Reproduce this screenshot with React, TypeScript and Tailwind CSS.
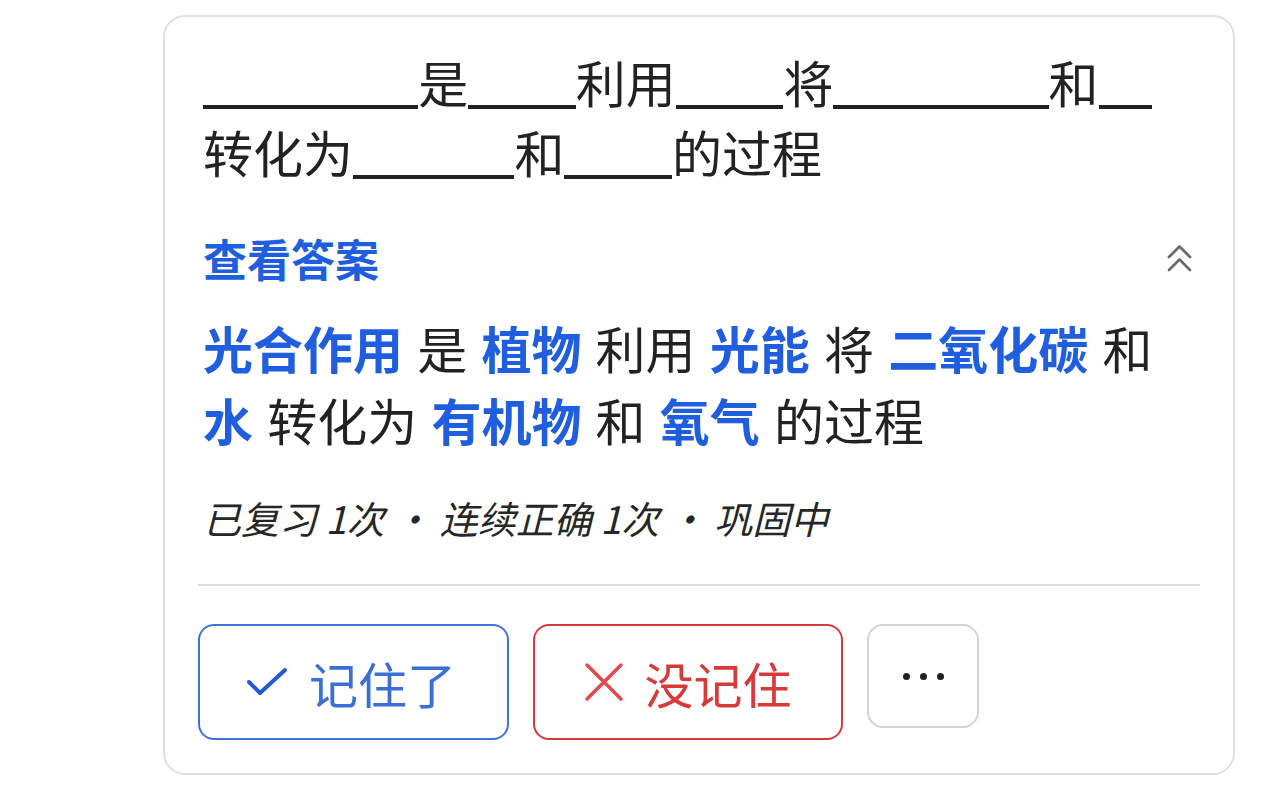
const font = { fontFamily: '"Noto Sans CJK SC", "Noto Sans", sans-serif' };

const answerParts: { text: string; hit?: boolean }[] = [
    { text: "光合作用", hit: true },
    { text: "是" },
    { text: "植物", hit: true },
    { text: "利用" },
    { text: "光能", hit: true },
    { text: "将" },
    { text: "二氧化碳", hit: true },
    { text: "和" },
    { text: "水", hit: true },
    { text: "转化为" },
    { text: "有机物", hit: true },
    { text: "和" },
    { text: "氧气", hit: true },
    { text: "的过程" },
];

// one underscore ~26.9px, two per answer character
const Blank = ({ chars }: { chars: number }) => (
    <span
        className="inline-block h-[4px] bg-[#222222] align-[-6px]"
        style={{ width: chars * 2 * 26.9 }}
    />
);

const App = () => {
    return (
        <div className="min-h-screen bg-white pt-[15px]" style={font}>
            <div className="ml-[163px] w-[1072px] h-[760px] border-2 border-[#e0e0e0] rounded-[22px] bg-white px-[33px] pt-[29px] pb-[33px]">
                <p className="px-[5px] text-[50px] leading-[70px] text-[#222222]">
                    {answerParts.map((p, i) =>
                        p.hit ? <Blank key={i} chars={p.text.length} /> : <span key={i}>{p.text}</span>
                    )}
                </p>

                <div className="mt-[41px] flex items-center justify-between px-[5px]">
                    <span className="text-[44px] leading-[62px] font-bold text-[#1f5fdf]">查看答案</span>
                    <svg width="25" height="29" viewBox="0 0 25 29" fill="none" className="mr-[3px]">
                        <path d="M2 13 L12.5 2.5 L23 13" stroke="#6b6b6b" strokeWidth="2.8" strokeLinecap="round" strokeLinejoin="round" />
                        <path d="M2 26 L12.5 15.5 L23 26" stroke="#6b6b6b" strokeWidth="2.8" strokeLinecap="round" strokeLinejoin="round" />
                    </svg>
                </div>

                <p className="mt-[22px] px-[5px] text-[50px] leading-[72px] text-[#222222] [word-spacing:3px]">
                    {answerParts.map((p, i) => (
                        <span key={i}>
                            {i > 0 && " "}
                            <span className={p.hit ? "font-bold text-[#1f5fdf]" : ""}>{p.text}</span>
                        </span>
                    ))}
                </p>

                <p className="mt-[38px] px-[5px] text-[38px] leading-[50px] italic text-[#262626]">
                    已复习 1次 · 连续正确 1次 · 巩固中
                </p>

                <div className="mt-[41px] h-[2px] bg-[#dddddd]" />

                <div className="mt-[38px] flex items-start gap-6">
                    <button className="w-[311px] h-[116px] rounded-[16px] border-2 border-[#3d74dc] flex items-center justify-center gap-[20px] text-[49px] text-[#3a6fd8]">
                        <svg width="44" height="30" viewBox="0 0 44 30" fill="none" className="ml-[-6px]">
                            <path d="M4 15 L15 26 L40 3" stroke="#2359d6" strokeWidth="4" strokeLinecap="round" strokeLinejoin="round" />
                        </svg>
                        <span className="leading-none">记住了</span>
                    </button>
                    <button className="w-[310px] h-[116px] rounded-[16px] border-2 border-[#d43c3c] flex items-center justify-center gap-[20px] text-[49px] text-[#d83a3a]">
                        <svg width="40" height="40" viewBox="0 0 40 40" fill="none">
                            <path d="M3 3 L37 37 M37 3 L3 37" stroke="#e5484a" strokeWidth="3.5" strokeLinecap="round" />
                        </svg>
                        <span className="leading-none">没记住</span>
                    </button>
                    <button className="w-[112px] h-[104px] rounded-[16px] border-2 border-[#d4d4d4] flex items-center justify-center gap-[10px]">
                        <span className="w-[7px] h-[7px] rounded-full bg-[#222222]" />
                        <span className="w-[7px] h-[7px] rounded-full bg-[#222222]" />
                        <span className="w-[7px] h-[7px] rounded-full bg-[#222222]" />
                    </button>
                </div>
            </div>
        </div>
    );
};

export default App;
